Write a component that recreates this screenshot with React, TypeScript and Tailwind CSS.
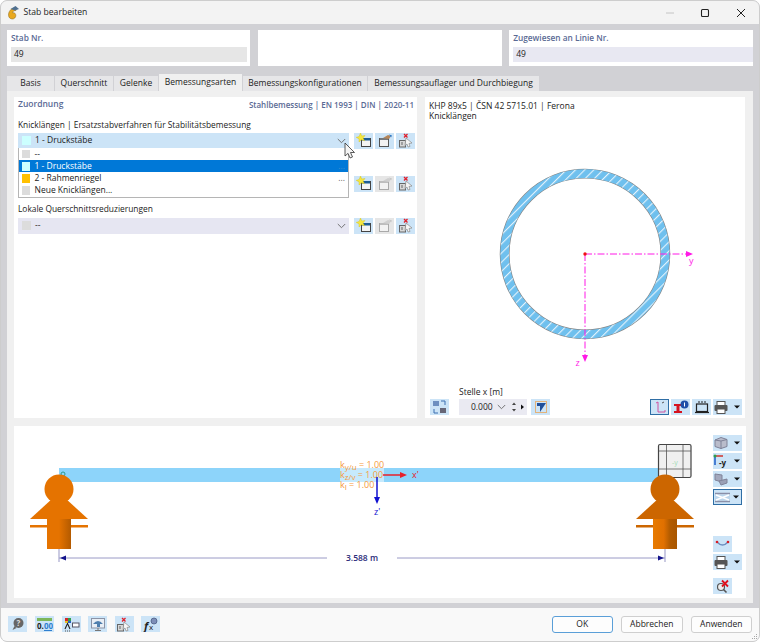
import type { ReactNode } from "react";

const FONT = "font-['Open_Sans','Noto_Sans',sans-serif]";

function IconBtn({ children, active, disabled, w }: { children: ReactNode; active?: boolean; disabled?: boolean; w?: boolean }) {
  return (
    <div
      className={`flex h-[16px] shrink-0 items-center justify-center ${w ? "w-[29px] justify-start" : "w-[19px]"} ${
        disabled ? "bg-[#e6e6e6]" : "bg-[#cce4f7]"
      } ${active ? "border border-[#2f6ea5]" : ""}`}
    >
      {children}
      {w && (
        <svg width="9" height="16" viewBox="0 0 9 16" className="ml-auto">
          <path d="M1 6.500h6l-3 3z" fill="#111" />
        </svg>
      )}
    </div>
  );
}

function NewIcon() {
  return (
    <svg width="16" height="15" viewBox="0 0 16 15">
      <rect x="5.500" y="5.500" width="9" height="8" fill="#f4f4f4" stroke="#444" />
      <rect x="6" y="5" width="8" height="2.500" fill="#1d5c94" />
      <path d="M4.500 0l1.200 3 3.300-.5-2 2.400 1.500 2.800-3.200-.9L3 9 3 5.800.2 4.400l3-1z" fill="#f5e642" stroke="#d8c400" strokeWidth=".4" />
    </svg>
  );
}

function EditIcon({ off }: { off?: boolean }) {
  return (
    <svg width="16" height="15" viewBox="0 0 16 15">
      <rect x="2.500" y="5.500" width="9" height="8" fill="#f2f2f2" stroke={off ? "#a9a9a9" : "#555"} />
      <rect x="3" y="5" width="8" height="2" fill={off ? "#bdbdbd" : "#77797c"} />
      <path d="M6 5l5-3 3 1-2 3z" fill={off ? "#cfcfcf" : "#b5865a"} />
      <path d="M12 1.500l3 1-1 2z" fill={off ? "#c6c6c6" : "#2c78c8"} />
    </svg>
  );
}

function DelIcon() {
  return (
    <svg width="16" height="15" viewBox="0 0 16 15">
      <path d="M6 1l3.500 3.500M9.500 1L6 4.500" stroke="#e0202a" strokeWidth="1.300" />
      <rect x="1.500" y="7.500" width="6" height="6.500" fill="#d8d8d8" stroke="#666" />
      <path d="M4 9v3" stroke="#666" />
      <path d="M8 5l6 5-3 .5 1 3-2 .5-1-3-2 1.500z" fill="#f5f5f5" stroke="#8a8a8a" strokeWidth=".7" />
    </svg>
  );
}

function Triple({ editOff }: { editOff?: boolean }) {
  return (
    <div className="flex gap-[2px]">
      <IconBtn><NewIcon /></IconBtn>
      <IconBtn disabled={editOff}><EditIcon off={editOff} /></IconBtn>
      <IconBtn><DelIcon /></IconBtn>
    </div>
  );
}

function Swatch({ color }: { color: string }) {
  return <span className={`h-[8.500px] w-[8.500px] shrink-0 ${color}`} />;
}

function Chevron() {
  return (
    <svg width="9" height="6" viewBox="0 0 9 6">
      <path d="M.8 1l3.700 3.700L8.200 1" fill="none" stroke="#666" strokeWidth=".9" />
    </svg>
  );
}

function Combo({ bg, swatch, label }: { bg: string; swatch: string; label: string }) {
  return (
    <div className={`flex h-[16px] flex-1 items-center pl-[4px] pr-[3px] ${bg}`}>
      <Swatch color={swatch} />
      <span className="ml-[4.500px] flex-1 text-[#222]">{label}</span>
      <Chevron />
    </div>
  );
}

function HeaderCard({ title, value, bg }: { title?: string; value?: string; bg?: string }) {
  return (
    <div className="h-[36px] flex-1 bg-white pl-[4px] pt-[1px]">
      {title && <div className="h-[16px] text-[8.300px] font-semibold leading-[13px] text-[#5a6a94]">{title}</div>}
      {value && <div className={`flex h-[15px] items-center pl-[3px] text-[#222] ${bg}`}>{value}</div>}
    </div>
  );
}

const TABS = [
  { label: "Basis", w: "w-[47px]" },
  { label: "Querschnitt", w: "w-[58px]" },
  { label: "Gelenke", w: "w-[44px]" },
  { label: "Bemessungsarten", w: "w-[83px]" },
  { label: "Bemessungskonfigurationen", w: "w-[124px]" },
  { label: "Bemessungsauflager und Durchbiegung", w: "w-[171px]" },
];

function Tabs() {
  return (
    <div className="mt-[8px] flex h-[17px] items-end gap-px">
      {TABS.map((t) => (
        <div
          key={t.label}
          className={`flex items-center justify-center whitespace-nowrap text-[#222] ${t.w} ${
            t.label === "Bemessungsarten" ? "h-[17px] bg-[#f0f0f0]" : "h-[15.500px] bg-[#e6e6e8]"
          }`}
        >
          {t.label}
        </div>
      ))}
    </div>
  );
}

function Popup() {
  return (
    <div className="absolute left-[4px] top-[51px] z-10 w-[331px] border border-t-0 border-[#b5b5b5] bg-white text-[#222]">
      <div className="flex h-[12.200px] items-center pl-[2.500px]">
        <Swatch color="bg-[#dcdcdc]" />
        <span className="ml-[4.500px]">--</span>
      </div>
      <div className="flex h-[12.200px] items-center bg-[#0078d7] pl-[2.500px] text-white">
        <Swatch color="bg-[#ccffff]" />
        <span className="ml-[4.500px] flex-1">1 - Druckstäbe</span>
        <span className="mr-[3px] text-[#3f8fd0]">...</span>
      </div>
      <div className="flex h-[12.200px] items-center pl-[2.500px]">
        <Swatch color="bg-[#ffc000]" />
        <span className="ml-[4.500px] flex-1">2 - Rahmenriegel</span>
        <span className="mr-[3px] text-[#666]">...</span>
      </div>
      <div className="flex h-[12.200px] items-center pl-[2.500px]">
        <Swatch color="bg-[#dcdcdc]" />
        <span className="ml-[4.500px]">Neue Knicklängen...</span>
      </div>
    </div>
  );
}

function Cursor() {
  return (
    <svg width="12" height="18" viewBox="0 0 12 18" className="absolute left-[330px] top-[45px] z-20">
      <path d="M1 1v13l3-2.600 2 4.600 2.500-1-2-4.500h4z" fill="#f4f4f4" stroke="#333" strokeWidth=".8" />
    </svg>
  );
}

function LeftPanel() {
  return (
    <div className="relative h-[321px] w-[403px] bg-white pl-[4px] pr-[2px]">
      <div className="flex h-[15px] items-center justify-between pr-[1px] font-semibold text-[#5a6a94]">
        <span>Zuordnung</span>
        <span className="text-[8px]">Stahlbemessung | EN 1993 | DIN | 2020-11</span>
      </div>
      <div className="mt-[5.500px] h-[13px] text-[8.350px] leading-[13px] text-[#222]">Knicklängen | Ersatzstabverfahren für Stabilitätsbemessung</div>
      <div className="mt-[2px] flex h-[16px] gap-[5px]">
        <Combo bg="bg-[#cce4f7]" swatch="bg-[#ccffff]" label="1 - Druckstäbe" />
        <Triple />
      </div>
      <div className="mt-[27px] flex h-[16px] gap-[5px]">
        <div className="flex-1" />
        <Triple editOff />
      </div>
      <div className="mt-[10.500px] h-[14px] text-[8.400px] leading-[14px] text-[#222]">Lokale Querschnittsreduzierungen</div>
      <div className="mt-[1.500px] flex h-[16px] gap-[5px]">
        <Combo bg="bg-[#e6e6f2]" swatch="bg-[#dcdcdc]" label="--" />
        <Triple editOff />
      </div>
      <Popup />
      <Cursor />
    </div>
  );
}

function SectionDrawing() {
  return (
    <svg viewBox="425 130 320 250" className="h-[250px] w-[320px]">
      <defs>
        <pattern id="hatch" width="6.500" height="6.500" patternUnits="userSpaceOnUse" patternTransform="rotate(45)">
          <rect width="6.500" height="6.500" fill="#6fc0ee" />
          <rect width="1.100" height="6.500" fill="#e4f3fc" />
        </pattern>
      </defs>
      <circle cx="585" cy="254" r="80.350" fill="none" stroke="#858585" strokeWidth="9.800" />
      <circle cx="585" cy="254" r="80.350" fill="none" stroke="url(#hatch)" strokeWidth="8.600" />
      <path d="M585 254H688M585 254V358" stroke="#ff19e6" strokeWidth="1" strokeDasharray="7 2 1.500 2" />
      <path d="M686 251l7 3-7 3zM582 355l3 7 3-7z" fill="#ff19e6" />
      <circle cx="585" cy="254" r="1.700" fill="#f01010" />
      <text x="689" y="264" fontSize="9" fill="#ff19e6">y</text>
      <text x="575.500" y="366" fontSize="9" fill="#ff19e6">z</text>
    </svg>
  );
}

function PrintIcon() {
  return (
    <svg width="16" height="15" viewBox="0 0 16 15">
      <rect x="4" y="1.500" width="8" height="4" fill="#fff" stroke="#555" />
      <rect x="1.500" y="5" width="13" height="6" rx="1" fill="#555" />
      <rect x="4" y="9" width="8" height="4.500" fill="#fff" stroke="#555" />
    </svg>
  );
}

function RightPanel() {
  return (
    <div className="flex h-[321px] w-[320px] flex-col bg-white text-[#222]">
      <div className="h-[33px] px-[4px] pt-[4px] leading-[10px]">
        <div>KHP 89x5 | ČSN 42 5715.01 | Ferona</div>
        <div>Knicklängen</div>
      </div>
      <div className="h-[250px]">
        <SectionDrawing />
      </div>
      <div className="ml-[34px] mt-[5px] h-[13px] leading-[13px]">Stelle x [m]</div>
      <div className="mt-[1px] flex h-[16px] items-center pl-[5px] pr-[3px]">
        <IconBtn>
          <svg width="15" height="14" viewBox="0 0 15 14">
            <rect x="1" y="1" width="6" height="5" fill="#6d8fc0" />
            <rect x="8" y="8" width="6" height="5" fill="#667" />
            <path d="M9 1h4v4M6 13H2V9" fill="none" stroke="#3a6fb0" />
          </svg>
        </IconBtn>
        <div className="ml-[10px] flex h-[16px] w-[68px] items-center bg-[#eaeaf2] pl-[12px]">
          <span className="w-[21px] text-right">0.000</span>
          <span className="ml-[5px]"><Chevron /></span>
          <svg width="18" height="12" viewBox="0 0 18 12" className="ml-[3px]">
            <path d="M3 4l2-2.500L7 4zM3 8l2 2.500L7 8z" fill="#444" />
            <path d="M12 3.500l3 2.500-3 2.500z" fill="#111" />
          </svg>
        </div>
        <div className="ml-[4px]">
          <IconBtn>
            <svg width="14" height="14" viewBox="0 0 14 14">
              <rect x="1.500" y="1.500" width="11" height="11" fill="none" stroke="#e2b27a" />
              <path d="M3 3h9L6 12V6H3z" fill="#1f4f9a" />
            </svg>
          </IconBtn>
        </div>
        <div className="ml-auto flex gap-[2px]">
          <IconBtn active>
            <svg width="14" height="14" viewBox="0 0 14 14">
              <path d="M5 2v10h7M5 2l-2 1M12 12v-2" fill="none" stroke="#d052a0" />
              <path d="M9 3l2-1" stroke="#555" />
            </svg>
          </IconBtn>
          <IconBtn>
            <svg width="16" height="15" viewBox="0 0 16 15">
              <path d="M1 4h8v2H6.500v5H9v2H1v-2h2.500V6H1z" fill="#d5121e" />
              <circle cx="11.500" cy="4.500" r="4" fill="#1d4fa8" />
              <rect x="11" y="2.500" width="1" height="4" fill="#fff" />
            </svg>
          </IconBtn>
          <IconBtn>
            <svg width="16" height="14" viewBox="0 0 16 14">
              <rect x="2.500" y="4" width="11" height="7.500" fill="none" stroke="#222" strokeWidth="1.200" />
              <path d="M5 3V1M8 3V1M11 3V1" stroke="#222" />
              <path d="M1 12.500h14" stroke="#222" strokeWidth="1.200" />
            </svg>
          </IconBtn>
          <IconBtn w><PrintIcon /></IconBtn>
        </div>
      </div>
    </div>
  );
}

function Support({ cx, dark }: { cx: number; dark?: boolean }) {
  const fill = dark ? "#cc6600" : "#e57300";
  return (
    <g>
      <circle cx={cx} cy="489" r="14.500" fill={fill} />
      <path d={`M${cx - 6} 498h12l23 21h-58z`} fill={fill} />
      <rect x={cx - 29} y="525" width="58" height="2.500" fill={fill} />
      <rect x={cx - 12} y="519" width="24" height="30" fill={dark ? "url(#bodyDark)" : "url(#bodyLight)"} />
    </g>
  );
}

function MemberDrawing() {
  return (
    <svg viewBox="14 426 695 172" className="h-[172px] w-[695px]">
      <defs>
        <linearGradient id="bodyLight">
          <stop offset="0" stopColor="#e57300" />
          <stop offset=".5" stopColor="#e57300" />
          <stop offset="1" stopColor="#b35a00" />
        </linearGradient>
        <linearGradient id="bodyDark">
          <stop offset="0" stopColor="#e87b00" />
          <stop offset=".45" stopColor="#e07000" />
          <stop offset=".7" stopColor="#b35c00" />
          <stop offset="1" stopColor="#a85600" />
        </linearGradient>
      </defs>
      <rect x="59" y="468" width="606" height="14" fill="#8dd4fa" />
      <rect x="340" y="461" width="44" height="28" fill="#fff" opacity=".5" />
      <circle cx="63" cy="474" r="2" fill="none" stroke="#2c9a8c" strokeWidth="1" />
      <g>
        <rect x="658.500" y="444.500" width="32.500" height="33" rx="1.500" fill="#f0f0f0" stroke="#444" strokeWidth="1.200" />
        <path d="M666.500 445v32M683 445v32M659 451h32M659 469h32" stroke="#555" strokeWidth=".8" />
        <text x="672" y="465" fontSize="7" fill="#9fdcb4">-y</text>
      </g>
      <Support cx={59} />
      <Support cx={665} dark />
      <path d="M59 549v13M665 549v13" stroke="#a9a9cf" strokeWidth="1.200" />
      <path d="M59 558h268M397 558h268" stroke="#8f8fc0" strokeWidth=".9" />
      <path d="M60 558l6-2.500v5zM664 558l-6-2.500v5z" fill="#14148c" />
      <text x="362" y="561" fontSize="8.500" fontWeight="600" fill="#2b2b7a" textAnchor="middle">3.588 m</text>
      <g fontSize="9" fill="#f59a3c">
        <text x="340" y="468">k<tspan dy="1.500" fontSize="8">y/u</tspan><tspan dy="-1.500"> = 1.00</tspan></text>
        <text x="340" y="478">k<tspan dy="1.500" fontSize="8">z/v</tspan><tspan dy="-1.500"> = 1.00</tspan></text>
        <text x="340" y="488">k<tspan dy="1.500" fontSize="8">l</tspan><tspan dy="-1.500"> = 1.00</tspan></text>
      </g>
      <path d="M383 475h18" stroke="#e8202a" strokeWidth="1.500" />
      <path d="M400 472l7 3-7 3z" fill="#e8202a" />
      <text x="412" y="478" fontSize="9" fill="#e8202a">x'</text>
      <path d="M377 477v21" stroke="#1010d0" strokeWidth="1.500" />
      <path d="M374 497l3 7 3-7z" fill="#1010d0" />
      <text x="374" y="515" fontSize="9" fill="#1010d0">z'</text>
    </svg>
  );
}

function ToolColumn() {
  return (
    <div className="flex w-[36px] flex-col pl-[4px] pt-[8.500px]">
      <IconBtn w>
        <svg width="16" height="14" viewBox="0 0 16 14">
          <path d="M2 4l6-2.500 6 2v7l-6 2-6-2z" fill="#b9bccb" stroke="#7f8298" />
          <path d="M8 5v8M2 4l6 1 6-1.500" fill="none" stroke="#7f8298" />
        </svg>
      </IconBtn>
      <div className="mt-[2px]">
        <IconBtn w>
          <svg width="16" height="15" viewBox="0 0 16 15">
            <path d="M2 3v9" stroke="#1d5cc8" strokeWidth="1.500" />
            <path d="M2 3h8" stroke="#d0342c" strokeWidth="1.500" />
            <circle cx="2" cy="3" r="1.500" fill="#2f9f4f" />
            <text x="6" y="13" fontSize="8" fontWeight="700" fill="#222">-y</text>
          </svg>
        </IconBtn>
      </div>
      <div className="mt-[2px]">
        <IconBtn w>
          <svg width="16" height="14" viewBox="0 0 16 14">
            <path d="M2 2l7 1v7l-7-2z" fill="#a3a8bd" stroke="#7f8298" />
            <path d="M6 9l8-2v4l-6 2z" fill="#9aa0b6" stroke="#7f8298" />
          </svg>
        </IconBtn>
      </div>
      <div className="mt-[2.500px]">
        <IconBtn w active>
          <svg width="17" height="13" viewBox="0 0 17 13">
            <path d="M1 2.500h15M1 10.500h15" stroke="#8a8fa8" strokeWidth="1.400" />
            <rect x="1" y="4" width="15" height="5" fill="#a9c6e2" opacity=".5" />
            <path d="M2 4l13 5M15 4L2 9" stroke="#fff" strokeWidth="1.400" />
          </svg>
        </IconBtn>
      </div>
      <div className="mt-[31px]">
        <IconBtn>
          <svg width="15" height="12" viewBox="0 0 15 12">
            <path d="M2 4q5.500 6 11 0" fill="none" stroke="#6d8fc0" strokeWidth="1.400" />
            <circle cx="2" cy="4" r="1.300" fill="#d81e26" />
            <circle cx="13" cy="4" r="1.300" fill="#d81e26" />
          </svg>
        </IconBtn>
      </div>
      <div className="mt-[2px]">
        <IconBtn w><PrintIcon /></IconBtn>
      </div>
      <div className="mt-[8px]">
        <IconBtn>
          <svg width="15" height="15" viewBox="0 0 15 15">
            <circle cx="6" cy="8" r="3.500" fill="#eee" stroke="#555" strokeWidth="1.200" />
            <path d="M8.500 10.500l3 3" stroke="#555" strokeWidth="1.600" />
            <path d="M7 1.500l6 6M13 1.500l-6 6" stroke="#e0101c" strokeWidth="1.800" />
          </svg>
        </IconBtn>
      </div>
    </div>
  );
}

function FooterIcons() {
  return (
    <div className="flex">
      <IconBtn>
        <svg width="14" height="14" viewBox="0 0 14 14">
          <circle cx="7.500" cy="6" r="5" fill="#666" />
          <path d="M3.500 9l-2 4 4-2z" fill="#666" />
          <text x="5.500" y="9" fontSize="8" fontWeight="700" fill="#ddd">?</text>
        </svg>
      </IconBtn>
      <div className="ml-[7.500px]">
        <IconBtn>
          <svg width="17" height="15" viewBox="0 0 17 15">
            <rect x="1" y="1" width="15" height="3" fill="#7cb65a" />
            <text x="1" y="12" fontSize="8" fontWeight="700" fill="#222">0.</text>
            <text x="8" y="12" fontSize="8" fontWeight="700" fill="#2f7fd0">00</text>
            <path d="M8 13.500h8" stroke="#2f7fd0" />
          </svg>
        </IconBtn>
      </div>
      <div className="ml-[8px]">
        <IconBtn>
          <svg width="17" height="15" viewBox="0 0 17 15">
            <rect x="2" y="1" width="3" height="3" fill="#d62828" />
            <rect x="5" y="1" width="3" height="3" fill="#2f9f4f" />
            <rect x="2" y="4" width="3" height="2" fill="#e6c020" />
            <rect x="5" y="4" width="3" height="2" fill="#2a5fc0" />
            <path d="M2 12l2.500-5.500L7 12" fill="none" stroke="#222" strokeWidth="1.100" />
            <rect x="9.500" y="6" width="6.500" height="4" fill="#fff" stroke="#556" />
            <path d="M2 14h6" stroke="#555" strokeDasharray="1 1" />
          </svg>
        </IconBtn>
      </div>
      <div className="ml-[7.500px]">
        <IconBtn>
          <svg width="16" height="15" viewBox="0 0 16 15">
            <rect x="1.500" y="1.500" width="13" height="9.500" fill="#e8eef5" stroke="#8b93a6" />
            <path d="M3 7q5-6 10 0l-3 0v3H7V7z" fill="#4f7fae" />
            <path d="M8 11v2M5 13.500h6" stroke="#777" />
          </svg>
        </IconBtn>
      </div>
      <div className="ml-[7.500px]">
        <IconBtn><DelIcon /></IconBtn>
      </div>
      <div className="ml-[7.500px]">
        <IconBtn>
          <svg width="16" height="15" viewBox="0 0 16 15">
            <text x="1" y="13" fontSize="11" fontStyle="italic" fontWeight="700" fill="#222">f</text>
            <text x="6" y="13" fontSize="8" fill="#222">x</text>
            <circle cx="11" cy="4" r="3" fill="#7e8fb8" stroke="#44557c" strokeWidth=".7" />
          </svg>
        </IconBtn>
      </div>
    </div>
  );
}

function Btn({ label, primary }: { label: string; primary?: boolean }) {
  return (
    <div
      className={`flex h-[17px] w-[61.500px] items-center justify-center rounded-[3px] bg-[#fdfdfd] text-[#222] ${
        primary ? "border-[1.500px] border-[#5a9fd8]" : "border border-[#cfcfcf]"
      }`}
    >
      {label}
    </div>
  );
}

export default function App() {
  return (
    <div className={`relative flex h-[642px] w-[760px] flex-col overflow-hidden rounded-[7px] border border-[#cdcdcd] bg-[#d1d1d5] text-[8.500px] ${FONT}`}>
      {/* title bar */}
      <div className="flex h-[23px] shrink-0 items-center bg-[#f3f3f3] pl-[6px] text-[8.600px] text-[#222]">
        <svg width="12" height="14" viewBox="0 0 12 14">
          <path d="M7 2.500C3.500 2.500 1.500 6 1.500 9c0 2.500 1.800 4 3.800 4s3.500-1.500 3.500-3.500S7.500 6.300 5.500 6.800C6 5.200 7 4.500 9 4.500z" fill="#e9a81e" stroke="#8a6a1a" strokeWidth=".5" />
          <path d="M3.500 3l5-3 3.500 3-4 1.500z" fill="#51708f" />
        </svg>
        <span className="ml-[4.500px]">Stab bearbeiten</span>
        <div className="ml-auto flex items-center">
          <svg width="10" height="10" viewBox="0 0 10 10" className="mr-[25px]">
            <path d="M1 5h8" stroke="#c4c4c4" />
          </svg>
          <svg width="10" height="10" viewBox="0 0 10 10" className="mr-[26px]">
            <rect x="1.500" y="1.500" width="7" height="7" rx="1" fill="none" stroke="#222" strokeWidth="1.100" />
          </svg>
          <svg width="10" height="10" viewBox="0 0 10 10" className="mr-[13px]">
            <path d="M1 1l8 8M9 1L1 9" stroke="#222" strokeWidth="1" />
          </svg>
        </div>
      </div>

      <div className="flex-1 px-[6px] pt-[6px]">
        <div className="flex gap-[7.500px]">
          <div className="flex flex-1 bg-white pr-[3.500px]">
            <HeaderCard title="Stab Nr." value="49" bg="bg-[#e6e6e6]" />
          </div>
          <HeaderCard />
          <HeaderCard title="Zugewiesen an Linie Nr." value="49" bg="bg-[#e8e8f2]" />
        </div>
        <Tabs />
        <div className="bg-[#f0f0f0] px-[7px] pb-[5px] pt-[6px]">
          <div className="flex gap-[8px]">
            <LeftPanel />
            <RightPanel />
          </div>
          <div className="mt-[8px] flex h-[172px] bg-white">
            <MemberDrawing />
            <ToolColumn />
          </div>
        </div>
      </div>

      {/* footer */}
      <div className="flex h-[33px] shrink-0 items-center bg-[#f9f9f9] pb-[1px] pl-[7px] pr-[7px]">
        <FooterIcons />
        <div className="ml-auto flex gap-[8px]">
          <Btn label="OK" primary />
          <Btn label="Abbrechen" />
          <Btn label="Anwenden" />
        </div>
      </div>
      <svg width="7" height="7" viewBox="0 0 7 7" className="absolute bottom-[1px] right-[1px]">
        <path d="M5.500 1v1M3.500 3v1M5.500 3v1M1.500 5v1M3.500 5v1M5.500 5v1" stroke="#a8a8a8" />
      </svg>
    </div>
  );
}
